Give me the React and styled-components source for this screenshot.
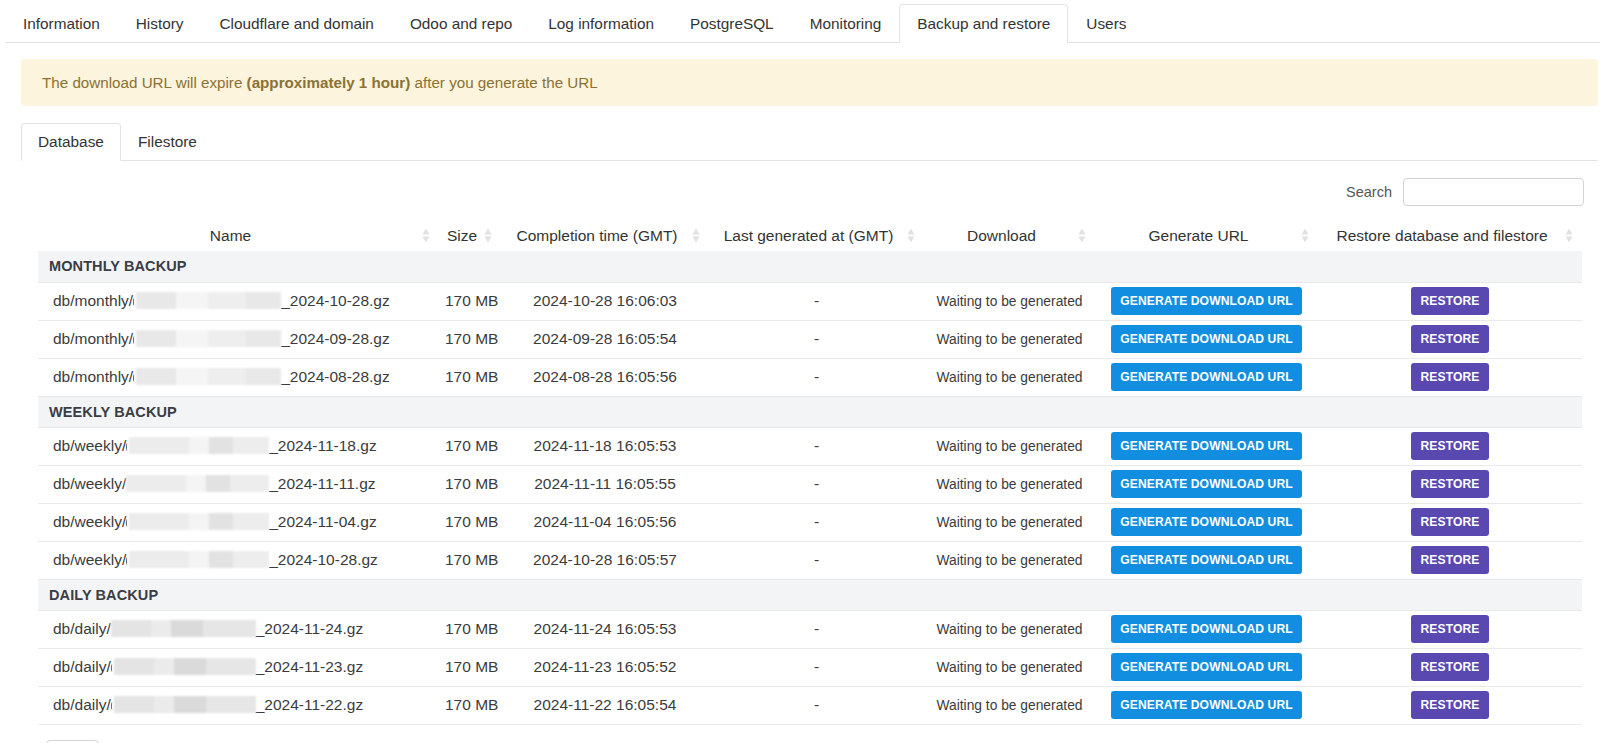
import React from "react";
import styled, { createGlobalStyle } from "styled-components";

const Global = createGlobalStyle`
  html, body { margin: 0; padding: 0; background: #fff; overflow: hidden; }
  body { font-family: "Liberation Sans", Arial, sans-serif; color: #333; }
  * { box-sizing: border-box; }
`;

const Page = styled.div`
  width: 1600px;
  padding-left: 5px;
`;

const TopTabs = styled.nav`
  display: flex;
  padding-top: 4px;
  border-bottom: 1px solid #e3e3e3;
`;

const TopTab = styled.div`
  height: 39px;
  padding: 0 17px;
  display: flex;
  align-items: center;
  font-size: 15.35px;
  color: #333;
  margin-bottom: -1px;
  border: 1px solid ${(p) => (p.$active ? "#e3e3e3" : "transparent")};
  border-bottom-color: ${(p) => (p.$active ? "#fff" : "transparent")};
  border-radius: 4px 4px 0 0;
  background: ${(p) => (p.$active ? "#fff" : "transparent")};
`;

const Content = styled.div`
  padding: 16px 2px 0 16px;
`;

const Alert = styled.div`
  background: #fcf4dd;
  color: #8a7134;
  font-size: 15.2px;
  line-height: 19px;
  padding: 14px 21px;
  border-radius: 4px;
  b { font-weight: bold; }
`;

const SubTabs = styled.div`
  display: flex;
  margin-top: 17px;
  border-bottom: 1px solid #e3e3e3;
`;

const SubTab = styled.div`
  height: 38px;
  padding: 0 16px;
  display: flex;
  align-items: center;
  font-size: 15.4px;
  color: #333;
  margin-bottom: -1px;
  border: 1px solid ${(p) => (p.$active ? "#e3e3e3" : "transparent")};
  border-bottom-color: ${(p) => (p.$active ? "#fff" : "transparent")};
  border-radius: 4px 4px 0 0;
`;

const Pane = styled.div`
  padding: 0 16px 0 17px;
`;

const SearchRow = styled.div`
  display: flex;
  justify-content: flex-end;
  align-items: center;
  gap: 11px;
  margin-top: 17px;
`;

const SearchLabel = styled.label`
  font-size: 14.5px;
  color: #555;
`;

const SearchInput = styled.input`
  width: 181px;
  height: 28px;
  margin-right: -2px;
  border: 1px solid #d4d4d4;
  border-radius: 4px;
  outline: none;
`;

const Table = styled.table`
  width: 1544px;
  margin-top: 14px;
  border-collapse: collapse;
  table-layout: fixed;
`;

const Th = styled.th`
  height: 31px;
  padding: 0 22px 0 6px;
  font-weight: normal;
  font-size: 15.5px;
  color: #333;
  text-align: center;
  position: relative;
  white-space: nowrap;
`;

const SortIcon = styled.svg`
  position: absolute;
  right: 9px;
  top: 8px;
`;

const GroupRow = styled.tr`
  background: #f3f4f6;
`;

const GroupCell = styled.td`
  height: 31px;
  padding: 0 11px;
  font-weight: bold;
  font-size: 14.5px;
  color: #3a3d44;
  letter-spacing: 0.1px;
`;

const Row = styled.tr`
  border-top: 1px solid #e9e9e9;
  &:last-child { border-bottom: 1px solid #e9e9e9; }
`;

const Td = styled.td`
  height: 38px;
  padding: 0 ${(p) => (p.$left ? "15px" : "6px")};
  text-align: ${(p) => (p.$left ? "left" : "center")};
  font-size: ${(p) => (p.$small ? "13.8px" : "15.5px")};
  color: #3b3b3b;
  white-space: nowrap;
`;

const Mark = styled.span`
  display: inline-block;
  vertical-align: middle;
  margin-top: 1px;
  width: 3px;
  height: 8px;
  border-left: 1.5px solid #666;
  border-radius: 50% 0 0 50%;
`;

const Redact = styled.span`
  display: inline-block;
  vertical-align: middle;
  width: ${(p) => p.$w}px;
  height: 17px;
  margin-top: -3px;
  background: ${(p) => p.$bg};
  filter: blur(1.2px);
`;

const Btn = styled.button`
  height: 28px;
  padding: 0 ${(p) => (p.$purple ? "10px" : "9px")};
  border: none;
  border-radius: 3px;
  background: ${(p) => (p.$purple ? "#5a48b1" : "#118ee0")};
  color: #fff;
  font-family: "Liberation Sans", Arial, sans-serif;
  font-weight: bold;
  font-size: 12.1px;
  letter-spacing: 0.1px;
`;

const Footer = styled.div`
  display: flex;
  justify-content: space-between;
  align-items: flex-start;
  margin-top: 15px;
  padding: 0 7px 0 8px;
`;

const LengthBox = styled.div`
  width: 53px;
  height: 30px;
  border: 1px solid #d4d4d4;
  border-radius: 4px;
`;

const Pager = styled.div`
  display: flex;
  margin-top: 3px;
  border: 1px solid #e0e0e0;
  border-radius: 4px;
  overflow: hidden;
`;

const PageItem = styled.div`
  width: ${(p) => p.$w}px;
  height: 32px;
  border-left: ${(p) => (p.$first ? "none" : "1px solid #e0e0e0")};
  background: ${(p) => (p.$active ? "#118ee0" : "#fff")};
`;

const Sort = () => (
  <SortIcon width="8" height="15" viewBox="0 0 8 15">
    <path d="M4 0.5 L7.5 6.5 L0.5 6.5 Z" fill="#e2e2e2" />
    <path d="M4 14.5 L7.5 8.5 L0.5 8.5 Z" fill="#e2e2e2" />
  </SortIcon>
);

const patA =
  "linear-gradient(90deg, #e8e8e8 0 40px, #f5f5f5 40px 72px, #eeeeee 72px 110px, #e8e8e8 110px 160px)";
const patB =
  "linear-gradient(90deg, #ececec 0 60px, #f4f4f4 60px 80px, #e2e2e2 80px 104px, #ededed 104px 160px)";
const patC =
  "linear-gradient(90deg, #e4e4e4 0 40px, #ebebeb 40px 60px, #dadada 60px 92px, #e6e6e6 92px 160px)";

const groups = [
  {
    title: "MONTHLY BACKUP",
    prefix: "db/monthly/",
    w: 148,
    bg: patA,
    rows: [
      ["2024-10-28", "2024-10-28 16:06:03", true],
      ["2024-09-28", "2024-09-28 16:05:54", true],
      ["2024-08-28", "2024-08-28 16:05:56", true],
    ],
  },
  {
    title: "WEEKLY BACKUP",
    prefix: "db/weekly/",
    w: 143,
    bg: patB,
    rows: [
      ["2024-11-18", "2024-11-18 16:05:53", true],
      ["2024-11-11", "2024-11-11 16:05:55", false],
      ["2024-11-04", "2024-11-04 16:05:56", true],
      ["2024-10-28", "2024-10-28 16:05:57", true],
    ],
  },
  {
    title: "DAILY BACKUP",
    prefix: "db/daily/",
    w: 145,
    bg: patC,
    rows: [
      ["2024-11-24", "2024-11-24 16:05:53", false],
      ["2024-11-23", "2024-11-23 16:05:52", true],
      ["2024-11-22", "2024-11-22 16:05:54", true],
    ],
  },
];

const cols = [
  ["Name", 401],
  ["Size", 62],
  ["Completion time (GMT)", 208],
  ["Last generated at (GMT)", 215],
  ["Download", 171],
  ["Generate URL", 223],
  ["Restore database and filestore", 264],
];

const topTabs = [
  "Information",
  "History",
  "Cloudflare and domain",
  "Odoo and repo",
  "Log information",
  "PostgreSQL",
  "Monitoring",
  "Backup and restore",
  "Users",
];

export default function App() {
  return (
    <Page>
      <Global />
      <TopTabs>
        {topTabs.map((t) => (
          <TopTab key={t} $active={t === "Backup and restore"}>
            {t}
          </TopTab>
        ))}
      </TopTabs>
      <Content>
        <Alert>
          The download URL will expire <b>(approximately 1 hour)</b> after you
          generate the URL
        </Alert>
        <SubTabs>
          <SubTab $active>Database</SubTab>
          <SubTab>Filestore</SubTab>
        </SubTabs>
        <Pane>
          <SearchRow>
            <SearchLabel>Search</SearchLabel>
            <SearchInput />
          </SearchRow>
          <Table>
            <colgroup>
              {cols.map(([n, w]) => (
                <col key={n} style={{ width: w }} />
              ))}
            </colgroup>
            <thead>
              <tr>
                {cols.map(([n]) => (
                  <Th key={n}>
                    {n}
                    <Sort />
                  </Th>
                ))}
              </tr>
            </thead>
            {groups.map((g) => (
              <tbody key={g.title}>
                <GroupRow>
                  <GroupCell colSpan={7}>{g.title}</GroupCell>
                </GroupRow>
                {g.rows.map(([d, t, mark]) => (
                  <Row key={d + t}>
                    <Td $left>
                      {g.prefix}
                      {mark ? <Mark /> : null}
                      <Redact $w={mark ? g.w - 3 : g.w} $bg={g.bg} />_{d}.gz
                    </Td>
                    <Td>170 MB</Td>
                    <Td>{t}</Td>
                    <Td>-</Td>
                    <Td $small>Waiting to be generated</Td>
                    <Td>
                      <Btn>GENERATE DOWNLOAD URL</Btn>
                    </Td>
                    <Td>
                      <Btn $purple>RESTORE</Btn>
                    </Td>
                  </Row>
                ))}
              </tbody>
            ))}
          </Table>
          <Footer>
            <LengthBox aria-label="Show entries" />
            <Pager aria-label="Pagination">
              <PageItem $first $w={58} aria-label="First" />
              <PageItem $w={58} aria-label="Previous" />
              <PageItem $w={34} $active aria-label="Page 1" />
              <PageItem $w={34} aria-label="Page 2" />
              <PageItem $w={59} aria-label="Next" />
              <PageItem $w={57} aria-label="Last" />
            </Pager>
          </Footer>
        </Pane>
      </Content>
    </Page>
  );
}
